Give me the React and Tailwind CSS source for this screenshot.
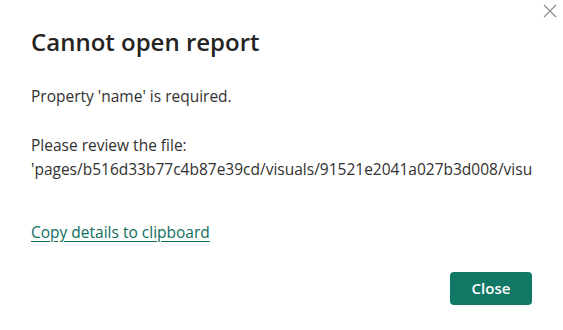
export default function App() {
  return (
    <div className="relative h-[330px] w-[563px] overflow-hidden bg-white font-['Segoe_UI','Open_Sans',sans-serif] text-[#323130]">
      <button className="absolute right-[5px] top-[3px] flex h-[16px] w-[16px] items-center justify-center text-[#8a8886]">
        <svg width="14" height="14" viewBox="0 0 14 14" fill="none" stroke="currentColor" strokeWidth="1.1">
          <path d="M1 1L13 13M13 1L1 13" />
        </svg>
      </button>

      <div className="flex flex-col px-[31px] pt-[26px]">
        <h1 className="text-[24px] font-semibold leading-[32px] text-[#252423]">Cannot open report</h1>

        <p className="mt-[28px] text-[15.5px] leading-[20px]">Property 'name' is required.</p>

        <div className="mt-[27px] text-[15.5px] leading-[24px]">
          <p>Please review the file:</p>
          <p className="whitespace-nowrap">
            'pages/b516d33b77c4b87e39cd/visuals/91521e2041a027b3d008/visu
          </p>
        </div>

        <a href="#" className="mt-[41px] self-start text-[15.5px] leading-[20px] text-[#0e6e5c] underline underline-offset-[3px]">
          Copy details to clipboard
        </a>

        <div className="mt-[30px] flex justify-end">
          <button className="h-[33px] w-[82px] rounded-[4px] bg-[#117865] text-[15px] font-semibold text-white">
            Close
          </button>
        </div>
      </div>
    </div>
  );
}
